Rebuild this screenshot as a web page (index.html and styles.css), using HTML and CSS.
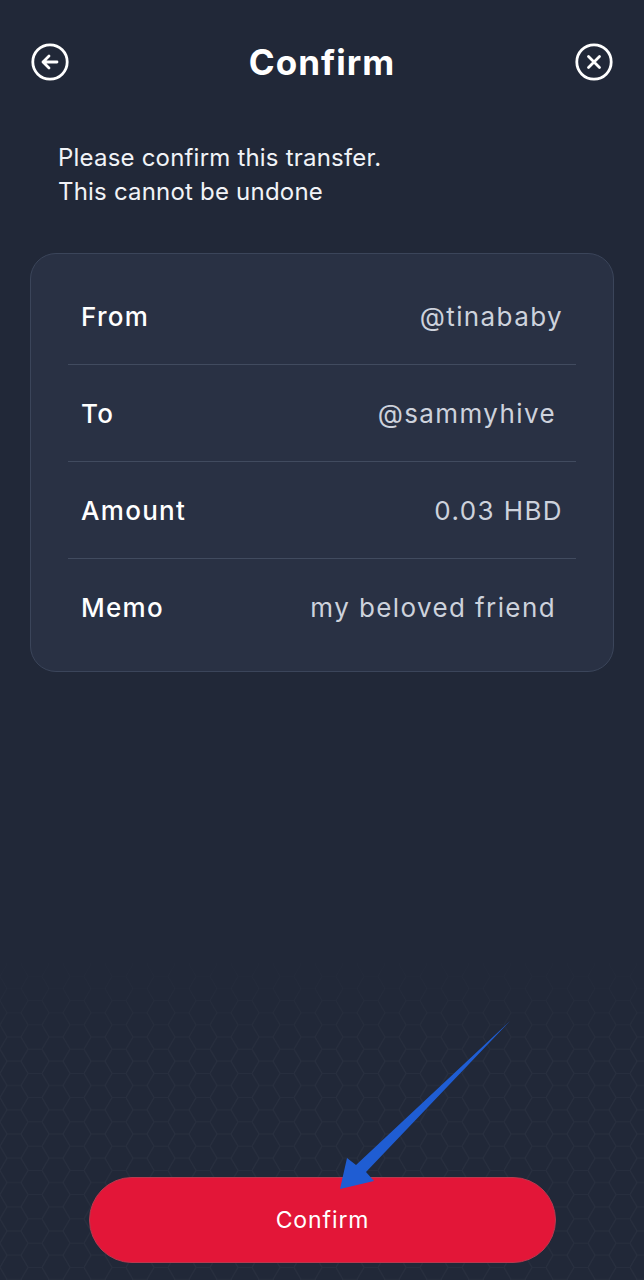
FILE: index.html
```html
<!DOCTYPE html>
<html lang="en">
<head>
<meta charset="utf-8">
<title>Confirm</title>
<link rel="stylesheet" href="styles.css">
</head>
<body>
<div class="screen">
  <svg class="hex-bg" width="644" height="340" aria-hidden="true">
    <defs>
      <pattern id="hex" width="42" height="24.25" patternUnits="userSpaceOnUse">
        <path d="M0 12.12 L7 0 L21 0 L28 12.12 L21 24.25 L7 24.25 Z M28 12.12 L42 12.12" fill="none" stroke="#ffffff" stroke-opacity="0.035" stroke-width="1.2"/>
      </pattern>
      <linearGradient id="fade" x1="0" y1="0" x2="0" y2="1">
        <stop offset="0" stop-color="#fff" stop-opacity="0"/>
        <stop offset="0.35" stop-color="#fff" stop-opacity="1"/>
        <stop offset="1" stop-color="#fff" stop-opacity="1"/>
      </linearGradient>
      <mask id="fadeMask">
        <rect width="644" height="340" fill="url(#fade)"/>
      </mask>
    </defs>
    <rect width="644" height="340" fill="url(#hex)" mask="url(#fadeMask)"/>
  </svg>

  <header class="header">
    <button class="icon-btn" aria-label="Back">
      <svg width="38" height="38" viewBox="0 0 38 38">
        <circle cx="19" cy="19" r="17.2" fill="none" stroke="#fff" stroke-width="2.8"/>
        <path d="M26 19 H12 M18 13 L12 19 L18 25" fill="none" stroke="#fff" stroke-width="2.8" stroke-linecap="round" stroke-linejoin="round"/>
      </svg>
    </button>
    <h1 class="title">Confirm</h1>
    <button class="icon-btn" aria-label="Close">
      <svg width="38" height="38" viewBox="0 0 38 38">
        <circle cx="19" cy="19" r="17.2" fill="none" stroke="#fff" stroke-width="2.8"/>
        <path d="M13.5 13.5 L24.5 24.5 M24.5 13.5 L13.5 24.5" fill="none" stroke="#fff" stroke-width="2.8" stroke-linecap="round"/>
      </svg>
    </button>
  </header>

  <p class="intro">Please confirm this transfer.<br>This cannot be undone</p>

  <section class="card">
    <div class="row"><span class="label">From</span><span class="value">@tinababy</span></div>
    <div class="row"><span class="label">To</span><span class="value value--inset">@sammyhive</span></div>
    <div class="row"><span class="label">Amount</span><span class="value">0.03 HBD</span></div>
    <div class="row"><span class="label">Memo</span><span class="value value--inset">my beloved friend</span></div>
  </section>

  <div class="spacer"></div>

  <button class="confirm-btn">Confirm</button>

  <svg class="annotation" width="644" height="1280" viewBox="0 0 644 1280" aria-hidden="true">
    <polygon points="510,1021 366,1172 374,1181 340,1189 347,1158 356,1165" fill="#1f5dd3"/>
  </svg>
</div>
</body>
</html>
```

FILE: styles.css
```css
* { box-sizing: border-box; }

html, body {
  margin: 0;
  padding: 0;
}

body {
  background: #212838;
  font-family: "Inter", "Open Sans", "Liberation Sans", sans-serif;
  color: #ffffff;
}

.screen {
  position: relative;
  width: 644px;
  height: 1280px;
  display: flex;
  flex-direction: column;
  overflow: hidden;
  background: #212838;
}

.hex-bg {
  position: absolute;
  left: 0;
  bottom: 0;
  pointer-events: none;
}

.header {
  position: relative;
  height: 124px;
  padding: 0 31px 0 31px;
  display: flex;
  align-items: center;
  justify-content: space-between;
}

.icon-btn {
  width: 38px;
  height: 38px;
  padding: 0;
  border: 0;
  background: none;
  display: flex;
}

.title {
  margin: 0;
  font-size: 35px;
  font-weight: 700;
  letter-spacing: 1px;
  color: #ffffff;
}

.intro {
  position: relative;
  margin: 17px 0 0 58px;
  font-size: 24px;
  line-height: 34px;
  letter-spacing: 0.2px;
  color: #f1f3f7;
  font-weight: 400;
}

.card {
  position: relative;
  margin: 44px 30px 0 30px;
  background: #293144;
  border: 1px solid #3b455a;
  border-radius: 26px;
  padding: 14px 37px 16px 37px;
  display: flex;
  flex-direction: column;
}

.row {
  height: 97px;
  padding: 0 13px;
  display: flex;
  align-items: center;
  justify-content: space-between;
  border-bottom: 1px solid #414b5f;
}

.row:last-child {
  border-bottom: 0;
  height: 96px;
}

.label {
  font-size: 26px;
  font-weight: 500;
  letter-spacing: 1.3px;
  color: #ffffff;
}

.value {
  font-size: 26px;
  font-weight: 400;
  letter-spacing: 1.4px;
  color: #cdd2dc;
}

.value--inset {
  margin-right: 7px;
}

.spacer {
  flex: 1;
}

.confirm-btn {
  position: relative;
  align-self: center;
  width: 467px;
  height: 86px;
  margin: 0 0 17px 1px;
  border-radius: 43px;
  border: 1.5px solid #b8394f;
  background: #e31638;
  color: #ffffff;
  font-family: "Inter", "Open Sans", "Liberation Sans", sans-serif;
  font-size: 23px;
  font-weight: 400;
  letter-spacing: 0.9px;
}

.annotation {
  position: absolute;
  left: 0;
  top: 0;
  pointer-events: none;
}
```
